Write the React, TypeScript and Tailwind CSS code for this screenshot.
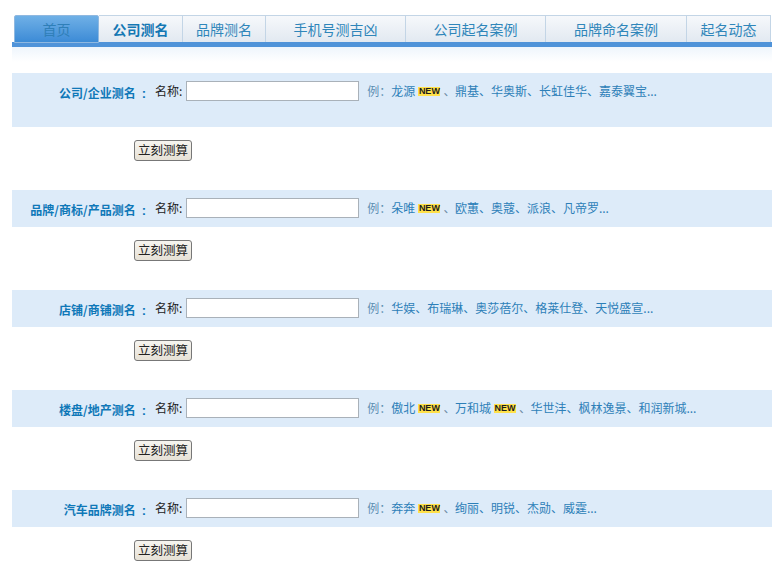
import React from "react";

const font = { fontFamily: '"Noto Sans CJK SC", "Liberation Sans", sans-serif' };

const tabs = [
  { label: "公司测名", width: "w-[83px]", bold: true },
  { label: "品牌测名", width: "w-[83px]" },
  { label: "手机号测吉凶", width: "w-[140px]" },
  { label: "公司起名案例", width: "w-[140px]" },
  { label: "品牌命名案例", width: "w-[141px]" },
  { label: "起名动态", width: "w-[84px]" },
];

type Item = { text: string; isNew?: boolean };

const rows: { title: string; items: Item[]; tall?: boolean }[] = [
  {
    title: "公司/企业测名",
    tall: true,
    items: [
      { text: "龙源", isNew: true },
      { text: "鼎基、华奥斯、长虹佳华、嘉泰翼宝..." },
    ],
  },
  {
    title: "品牌/商标/产品测名",
    items: [
      { text: "朵唯", isNew: true },
      { text: "欧蕙、奥蔻、派浪、凡帝罗..." },
    ],
  },
  {
    title: "店铺/商铺测名",
    items: [{ text: "华娱、布瑞琳、奥莎蓓尔、格莱仕登、天悦盛宣..." }],
  },
  {
    title: "楼盘/地产测名",
    items: [
      { text: "傲北", isNew: true },
      { text: "万和城", isNew: true },
      { text: "华世沣、枫林逸景、和润新城..." },
    ],
  },
  {
    title: "汽车品牌测名",
    items: [
      { text: "奔奔", isNew: true },
      { text: "绚丽、明锐、杰勋、威霆..." },
    ],
  },
];

function NewBadge() {
  return (
    <span className="mx-[3px] inline-flex h-[9px] w-[22px] items-center justify-center bg-[#ffe14a] font-['Liberation_Sans'] text-[9px] leading-none font-bold text-[#1d1d1d]">
      NEW
    </span>
  );
}

function Row({ title, items, tall }: { title: string; items: Item[]; tall?: boolean }) {
  return (
    <div className="mb-[29px]">
      <div className={`flex items-start bg-[#ddebf9] pt-2 ${tall ? "h-[54px]" : "h-[37px]"}`}>
        <div className="w-[134px] pt-[2px] text-right text-xs leading-[19px] font-bold whitespace-nowrap text-[#0f78b8]">
          {title}
          <span className="ml-[6px] font-['Liberation_Sans'] text-[13px]">:</span>
        </div>
        <div className="ml-[9px] text-xs leading-[19px] whitespace-nowrap text-[#222222]">名称:</div>
        <input
          className="ml-[4px] h-[20px] w-[173px] border border-[#a9b1b9] bg-white"
          type="text"
        />
        <div className="ml-2 flex items-center text-xs leading-[20px] whitespace-nowrap text-[#2d7fb8]">
          <span className="text-[#5d8fb3]">例：</span>
          {items.map((item) => (
            <span key={item.text} className="inline-flex items-center">
              {item.text}
              {item.isNew && (
                <>
                  <NewBadge />
                  <span className="w-[11.5px] text-[#6f8ea5]">、</span>
                </>
              )}
            </span>
          ))}
        </div>
      </div>
      <button className="mt-[13px] ml-[122px] flex h-[21px] w-[58px] items-center justify-center rounded-[3px] border border-[#777777] bg-gradient-to-b from-[#f7f5f0] to-[#e6e1d6] text-[12.5px] leading-none text-[#222222]">
        立刻测算
      </button>
    </div>
  );
}

export default function App() {
  return (
    <div className="h-[572px] w-[784px] overflow-hidden bg-white pt-[15px] pl-3" style={font}>
      <div className="w-[760px]">
        <div className="flex h-[27px] pl-[2px]">
          <div className="flex h-[28px] w-[85px] items-center justify-center rounded-t-[2px] border border-[#8fb8e0] bg-gradient-to-b from-[#6fb0e6] to-[#3c8bd6] text-sm text-[#2f7fb8]">
            首页
          </div>
          <div className="flex border-t border-r border-[#c3d5e6]">
            {tabs.map((tab) => (
              <div
                key={tab.label}
                className={`flex h-[26px] items-center justify-center border-l border-[#c3d5e6] bg-gradient-to-b from-[#f6f8fb] to-[#e2e9f1] text-sm first:border-l-0 ${tab.width} ${tab.bold ? "font-bold text-[#1478b4]" : "text-[#2f86ba]"}`}
              >
                {tab.label}
              </div>
            ))}
          </div>
        </div>
        <div className="h-[5px] bg-[#4f93d9]" />
        <div className="h-[15px] bg-gradient-to-b from-[#eef5fc] to-white" />
        <div className="mt-[11px]">
          {rows.map((row) => (
            <Row key={row.title} {...row} />
          ))}
        </div>
      </div>
    </div>
  );
}
